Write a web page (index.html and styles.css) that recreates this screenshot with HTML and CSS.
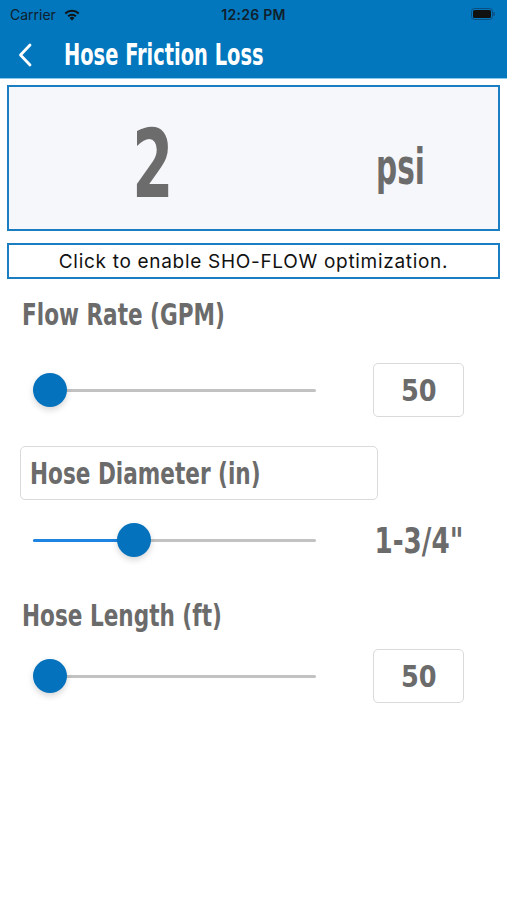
FILE: index.html
```html
<!DOCTYPE html>
<html>
<head>
<meta charset="utf-8">
<link rel="stylesheet" href="styles.css">
</head>
<body>
<header class="header">
  <div class="statusbar">
    <div class="sb-left">
      <span class="carrier">Carrier</span>
      <svg class="wifi" width="18" height="13" viewBox="0 0 18 13">
        <path d="M9 12.5 L6.6 9.9 A3.6 3.6 0 0 1 11.4 9.9 Z" fill="#111"/>
        <path d="M4.4 7.6 A6.6 6.6 0 0 1 13.6 7.6 L12.2 9.1 A4.6 4.6 0 0 0 5.8 9.1 Z" fill="#111"/>
        <path d="M1.6 4.7 A10.5 10.5 0 0 1 16.4 4.7 L15 6.2 A8.5 8.5 0 0 0 3 6.2 Z" fill="#111"/>
      </svg>
    </div>
    <div class="time">12:26 PM</div>
    <div class="sb-right">
      <svg class="battery" width="24" height="12" viewBox="0 0 24 12">
        <rect x="0.5" y="0.5" width="21" height="11" rx="3" fill="none" stroke="#0a4f80" stroke-width="1"/>
        <rect x="2" y="2" width="18" height="8" rx="1.6" fill="#111"/>
        <rect x="22.3" y="4" width="1.5" height="4" rx="0.7" fill="#0a4f80"/>
      </svg>
    </div>
  </div>
  <div class="navbar">
    <svg class="back" width="16" height="24" viewBox="0 0 16 24">
      <path d="M13 2 L3.5 12 L13 22" fill="none" stroke="#fff" stroke-width="2.8" stroke-linecap="round" stroke-linejoin="round"/>
    </svg>
    <h1 class="title"><span class="cond t-title">Hose Friction Loss</span></h1>
  </div>
</header>
<main class="content">
  <section class="result">
    <div class="result-value"><span class="cond t-big">2</span></div>
    <div class="result-unit"><span class="cond t-unit">psi</span></div>
  </section>
  <button class="optimize">Click to enable SHO-FLOW optimization.</button>

  <h2 class="label label-flow"><span class="cond t-label">Flow Rate (GPM)</span></h2>
  <div class="row row-flow">
    <div class="slider"><div class="track"></div><div class="thumb" style="left:0px"></div></div>
    <div class="valuebox"><span class="cond t-num">50</span></div>
  </div>

  <div class="label-box"><span class="cond t-label">Hose Diameter (in)</span></div>
  <div class="row row-diam">
    <div class="slider"><div class="track"></div><div class="fill" style="width:100px"></div><div class="thumb" style="left:84px"></div></div>
    <div class="valuetext"><span class="cond t-size">1-3/4"</span></div>
  </div>

  <h2 class="label label-length"><span class="cond t-label">Hose Length (ft)</span></h2>
  <div class="row row-length">
    <div class="slider"><div class="track"></div><div class="thumb" style="left:0px"></div></div>
    <div class="valuebox"><span class="cond t-num">50</span></div>
  </div>
</main>
</body>
</html>
```

FILE: styles.css
```css
* { box-sizing: border-box; }
html, body { margin: 0; padding: 0; background: #fff; }
body { width: 507px; height: 900px; overflow: hidden; }

.cond {
  display: inline-block;
  font-family: "DejaVu Sans Condensed", "DejaVu Sans", sans-serif;
  font-stretch: condensed;
  font-weight: bold;
  white-space: nowrap;
}

.header { background: #0277bd; border-bottom: 1px solid #8cc8ea; }
.statusbar {
  height: 28px;
  display: grid;
  grid-template-columns: 1fr auto 1fr;
  align-items: center;
  padding: 0 10px;
  font-family: "Inter", "Liberation Sans", sans-serif;
  font-size: 14px;
  color: #10202c;
}
.sb-left { display: flex; align-items: center; gap: 7px; }
.time { font-weight: 600; letter-spacing: 0.3px; }
.sb-right { display: flex; justify-content: flex-end; padding-right: 2px; }
.navbar {
  height: 50px;
  display: flex;
  align-items: center;
  padding-left: 17px;
  gap: 31px;
}
.back { flex: none; margin-top: 3px; }
.title {
  margin: 0;
  color: #fff;
  line-height: 36px;
  font-size: 30px;
  padding-top: 3px;
}
.t-title { transform: scaleX(0.72); transform-origin: left center; }

.content { padding: 6px 7px 0; }
.result {
  height: 146px;
  border: 2px solid #1b7dc2;
  background: #f6f7fb;
  display: grid;
  grid-template-columns: 288px 1fr;
  align-items: center;
  justify-items: center;
  color: #6c6c6c;
}
.result-value { font-size: 95px; line-height: 1; padding-top: 13px; }
.t-big { transform: scaleX(0.69); }
.result-unit { font-size: 49px; line-height: 1; padding-top: 18px; padding-left: 6px; }
.t-unit { transform: scaleX(0.67); }

.optimize {
  display: block;
  width: 100%;
  height: 36px;
  margin-top: 12px;
  border: 2px solid #1b7dc2;
  background: #fff;
  font-family: "Inter", "Liberation Sans", sans-serif;
  font-size: 19px;
  letter-spacing: 0.7px;
  color: #111;
  padding: 0;
}

.label, .label-box, .valuebox, .valuetext { color: #6b6b6b; }
.label {
  margin: 0 0 0 15px;
  font-size: 30px;
  line-height: 36px;
  font-weight: bold;
}
.t-label { transform: scaleX(0.8); transform-origin: left center; }
.label-flow { margin-top: 18px; }
.label-box {
  margin: 29px 0 0 13px;
  width: 358px;
  height: 54px;
  border: 1px solid #dadada;
  border-radius: 5px;
  padding-left: 9px;
  display: flex;
  align-items: center;
  font-size: 30px;
}
.label-length { margin-top: 31px; }

.row {
  display: flex;
  align-items: center;
  height: 54px;
  padding-left: 26px;
}
.row-flow { margin-top: 30px; }
.row-diam { margin-top: 13px; }
.row-length { margin-top: 15px; }
.slider { position: relative; width: 283px; height: 34px; flex: none; }
.track {
  position: absolute; left: 0; right: 0; top: 16px; height: 3px;
  background: #c2c2c2; border-radius: 2px;
}
.fill {
  position: absolute; left: 0; top: 16px; height: 3px;
  background: #1e84e2; border-radius: 2px;
}
.thumb {
  position: absolute; top: 0; width: 34px; height: 34px; border-radius: 50%;
  background: #0572bd;
  box-shadow: 0 3px 6px rgba(0,0,0,0.16);
}
.valuebox {
  margin-left: 57px;
  width: 91px;
  height: 54px;
  border: 1px solid #dadada;
  border-radius: 5px;
  display: flex; align-items: center; justify-content: center;
  font-size: 30px;
}
.t-num { transform: scaleX(0.95); }
.valuetext {
  margin-left: 57px;
  width: 91px;
  flex: none;
  display: flex;
  justify-content: center;
  font-size: 36px;
}
.t-size { transform: scaleX(0.81); }
```
